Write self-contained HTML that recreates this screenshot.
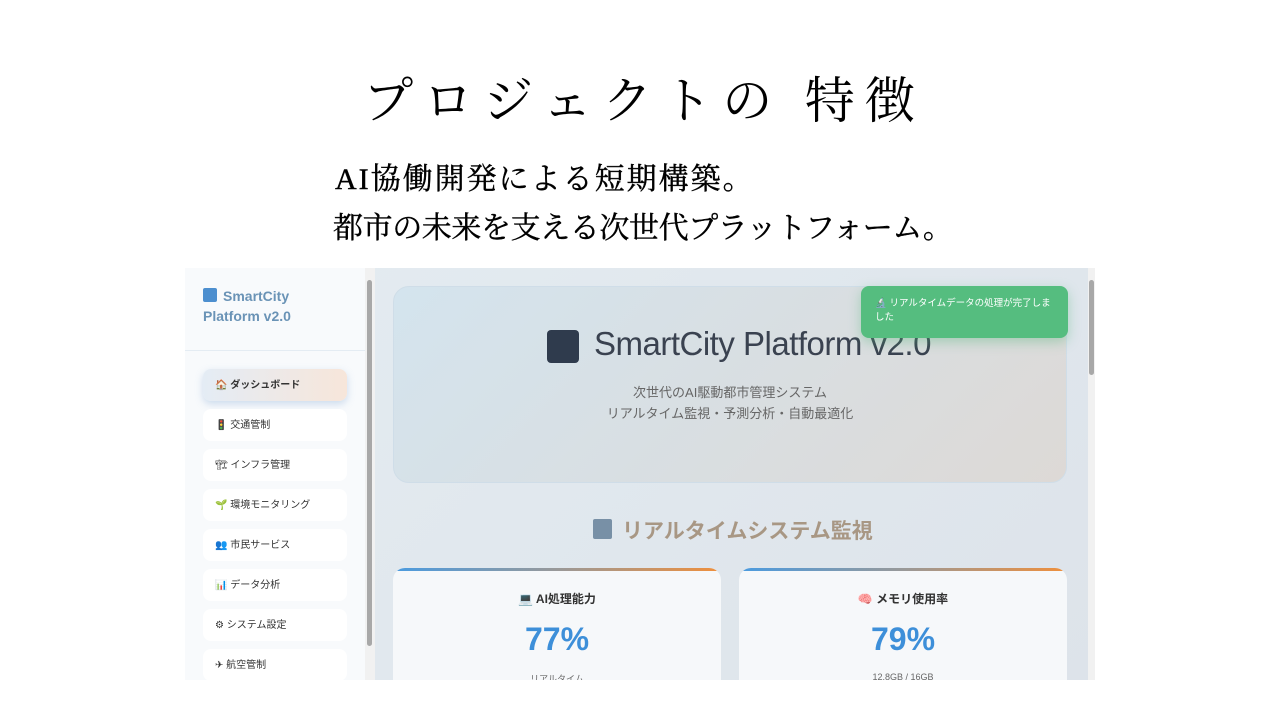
<!DOCTYPE html><html><head><meta charset="utf-8"><style>
body{margin:0;width:1280px;height:720px;background:#fff;position:relative;overflow:hidden;font-family:"Liberation Sans","Noto Sans CJK JP",sans-serif}
.t{position:absolute;left:0;width:1280px;text-align:center;top:68px;font-family:"Liberation Serif","Noto Serif CJK SC",serif;font-size:50px;letter-spacing:10px;color:#000;line-height:66px;padding-left:8px;box-sizing:border-box}
.s{position:absolute;font-family:"Liberation Serif","Noto Serif CJK SC",serif;font-size:30px;color:#000;line-height:40px;white-space:nowrap;-webkit-text-stroke:0.4px #000}
.shot{position:absolute;left:185px;top:268px;width:910px;height:412px;overflow:hidden;background:linear-gradient(135deg,#e4ecf1,#dde3ea)}
.side{position:absolute;left:0;top:0;width:180px;height:412px;background:#f8fafc}
.logo{position:absolute;left:18px;top:18px;font-weight:bold;font-size:14px;line-height:20px;color:#6a93b6}
.logo i{display:inline-block;width:14px;height:14px;background:#4d8fcf;border-radius:2px;margin-right:6px;vertical-align:-1px}
.hr{position:absolute;left:0;top:82px;width:180px;border-top:1px solid #e4ecf3}
.nav{position:absolute;left:18px;width:144px;height:32px;background:#fff;border-radius:8px;font-size:10px;line-height:34px;color:#333;box-sizing:border-box;padding-left:12px}
.nav.a{background:linear-gradient(90deg,#e4ecf5,#f7e6da);font-weight:bold;box-shadow:0 3px 8px rgba(120,160,210,.35)}
.sb{position:absolute;background:#f1f1f1}
.th{position:absolute;background:#a8a8a8;border-radius:3px}
.hero{position:absolute;left:208px;top:18px;width:674px;height:197px;border-radius:16px;background:linear-gradient(135deg,#d4e4ee,#ddd9d6);border:1px solid #cfdde8;box-sizing:border-box}
.toast{position:absolute;left:676px;top:18px;width:207px;height:52px;background:#55bd7f;border-radius:8px;color:#fff;font-size:9.5px;line-height:14px;padding:11px 12px 0 14px;box-sizing:border-box;box-shadow:0 4px 12px rgba(80,180,120,.4)}
.card{position:absolute;top:300px;width:328px;height:130px;background:#f6f8fa;border-radius:12px;text-align:center;overflow:hidden}
.card b.bar{position:absolute;left:0;top:0;width:100%;height:3px;background:linear-gradient(90deg,#4a9be0,#999,#ef8f3c)}
</style></head><body>
<div class="t">プロジェクトの 特徴</div>
<div class="s" style="left:335px;top:160px;letter-spacing:2px">AI協働開発による短期構築。</div>
<div class="s" style="left:333px;top:209px;letter-spacing:-0.4px">都市の未来を支える次世代プラットフォーム。</div>
<div class="shot">
<div class="side">
<div class="logo"><i></i>SmartCity<br>Platform v2.0</div>
<div class="hr"></div>
<div class="nav a" style="top:101px">🏠 ダッシュボード</div>
<div class="nav" style="top:141px">🚦 交通管制</div>
<div class="nav" style="top:181px">🏗 インフラ管理</div>
<div class="nav" style="top:221px">🌱 環境モニタリング</div>
<div class="nav" style="top:261px">👥 市民サービス</div>
<div class="nav" style="top:301px">📊 データ分析</div>
<div class="nav" style="top:341px">⚙ システム設定</div>
<div class="nav" style="top:381px">✈ 航空管制</div>
</div>
<div class="sb" style="left:180px;top:0;width:10px;height:412px"></div><div class="th" style="left:182px;top:12px;width:5px;height:366px"></div>
<div class="sb" style="left:903px;top:0;width:7px;height:412px"></div><div class="th" style="left:904px;top:12px;width:5px;height:95px"></div>
<div class="hero">
<div style="position:absolute;left:153px;top:43px;width:32px;height:33px;background:#2f3b4d;border-radius:4px"></div>
<div style="position:absolute;left:200px;top:38px;font-size:33px;color:#3a4250;white-space:nowrap;letter-spacing:-0.5px">SmartCity Platform v2.0</div>
<div style="position:absolute;left:0;width:100%;top:95px;text-align:center;font-size:13px;line-height:21px;color:#666">次世代のAI駆動都市管理システム<br>リアルタイム監視・予測分析・自動最適化</div>
</div>
<div class="toast">🔬 リアルタイムデータの処理が完了しました</div>
<div style="position:absolute;left:408px;top:251px;width:19px;height:20px;background:#7890a6;border-radius:2px"></div>
<div style="position:absolute;left:437px;top:247px;font-size:21px;font-weight:bold;color:#a89784;white-space:nowrap">リアルタイムシステム監視</div>
<div class="card" style="left:208px"><b class="bar"></b><div style="margin-top:22px;font-size:12px;font-weight:bold;color:#333">💻 AI処理能力</div><div style="margin-top:14px;font-size:32px;font-weight:bold;color:#3d8fd9">77%</div><div style="margin-top:14px;font-size:9px;color:#666">リアルタイム</div></div>
<div class="card" style="left:554px"><b class="bar"></b><div style="margin-top:22px;font-size:12px;font-weight:bold;color:#333">🧠 メモリ使用率</div><div style="margin-top:14px;font-size:32px;font-weight:bold;color:#3d8fd9">79%</div><div style="margin-top:14px;font-size:9px;color:#666">12.8GB / 16GB</div></div>
</div>
</body></html>
